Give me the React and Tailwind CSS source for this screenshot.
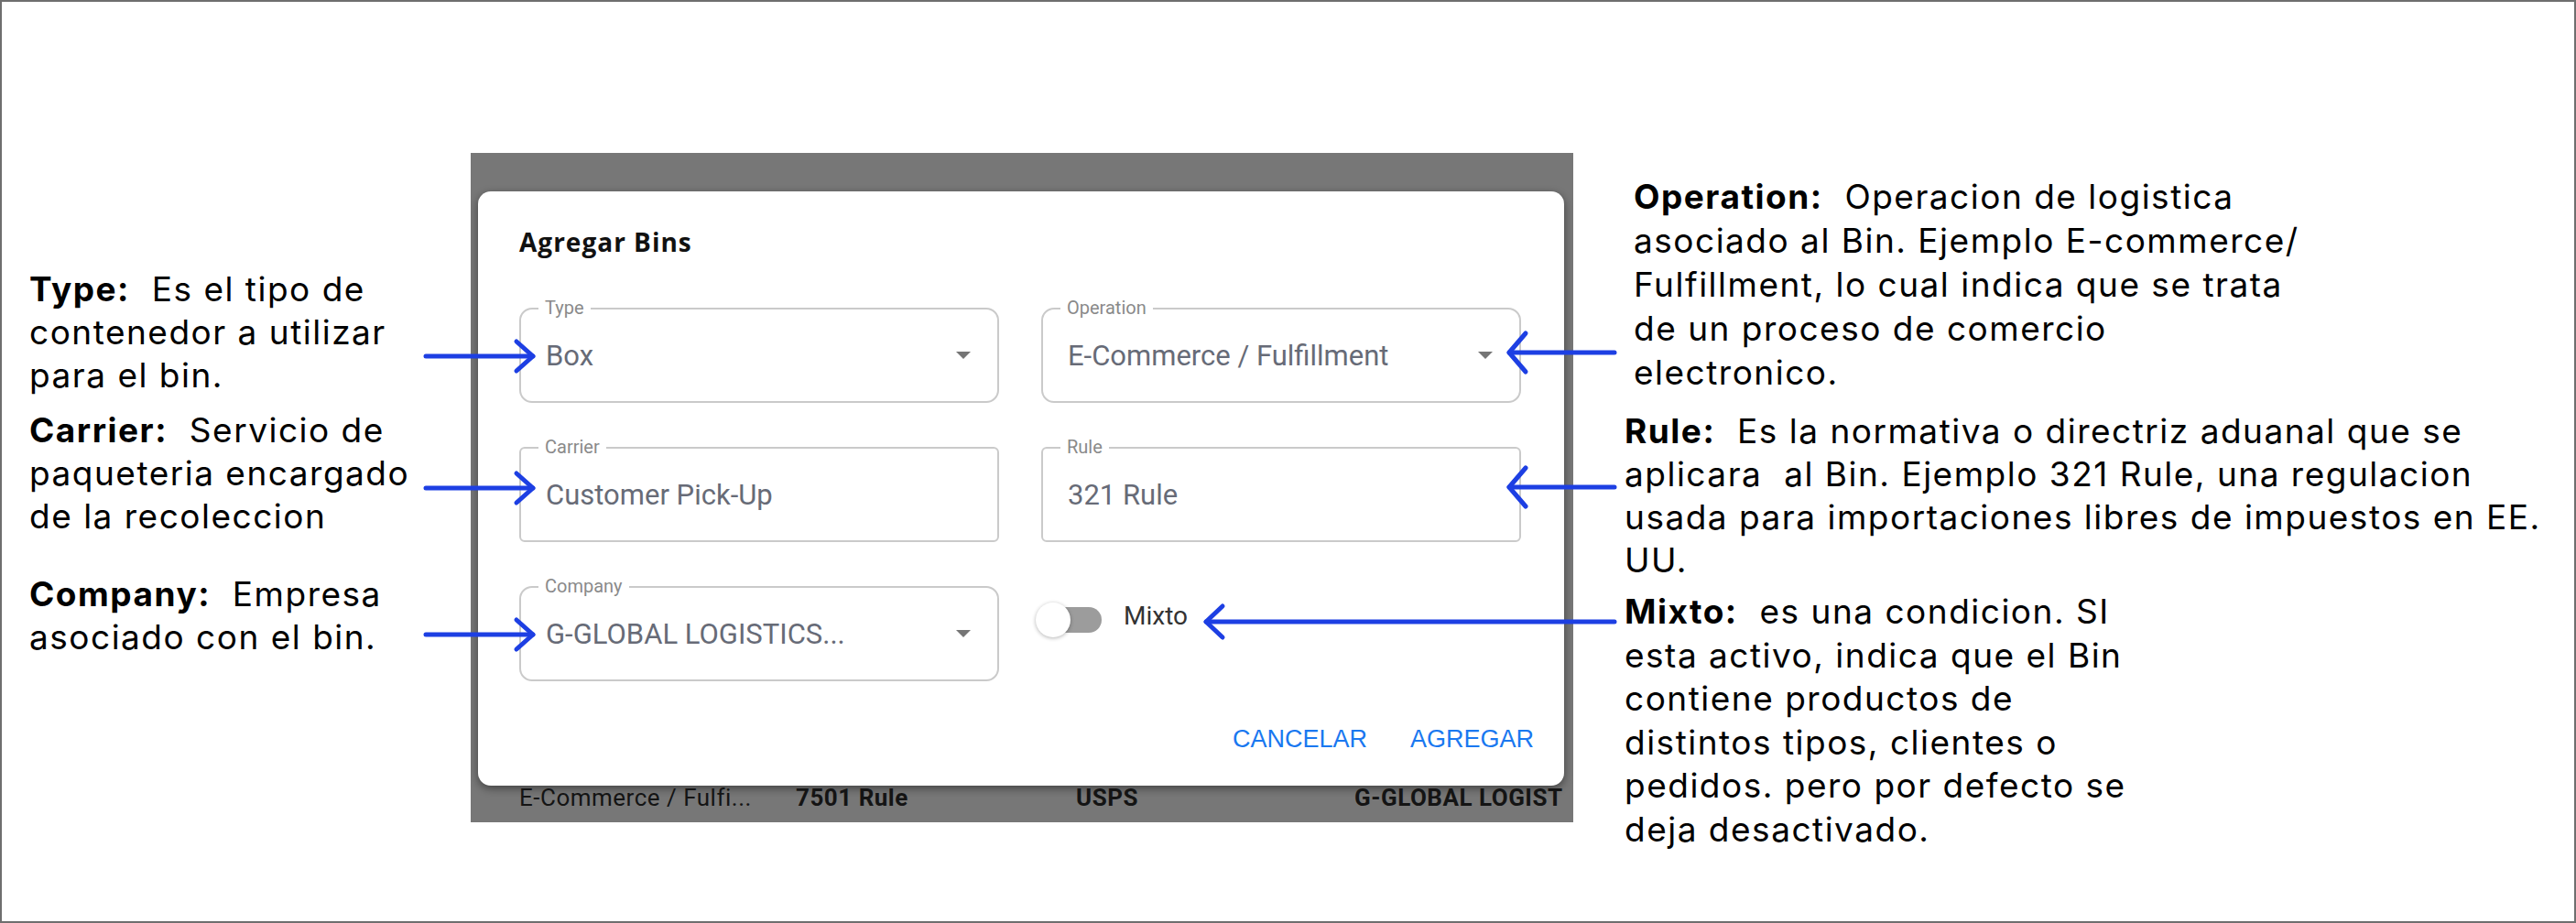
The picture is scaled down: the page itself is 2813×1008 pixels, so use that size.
import React from "react";

const inter = { fontFamily: "Inter, 'Liberation Sans', sans-serif" };

function Note({ label, lines, className }) {
  return (
    <div className={className}>
      {lines.map((line, i) => (
        <div key={i} className="whitespace-pre">
          {i === 0 && <span className="font-bold">{label}</span>}
          {i === 0 ? "\u00a0 " + line : line}
        </div>
      ))}
    </div>
  );
}

function Field({ label, value, select }) {
  return (
    <div
      className={
        select
          ? "relative h-[104px] border-2 border-[#cacaca] rounded-[14px] flex items-center pl-[27px] pr-[29px]"
          : "relative h-[104px] border-2 border-[#cacaca] rounded-[6px] flex items-center pl-[27px] pr-[29px]"
      }
    >
      <span className="absolute -top-[12px] left-[19px] bg-white px-[7px] text-[20px] leading-[20px] text-[#8a8a8a]">
        {label}
      </span>
      <span className="flex-1 text-[31px] leading-none text-[#676b77] whitespace-nowrap">
        {value}
      </span>
      {select && (
        <svg width="16" height="8" viewBox="0 0 16 8">
          <path d="M0 0h16L8 8z" fill="#757575" />
        </svg>
      )}
    </div>
  );
}

function Arrow({ x1, x2, y, dx, dy }) {
  // arrowhead sits at x2, pointing away from x1
  const dir = x2 > x1 ? -1 : 1;
  return (
    <g>
      <line x1={x1} y1={y} x2={x2} y2={y} />
      <polyline points={`${x2 + dir * dx},${y - dy} ${x2},${y} ${x2 + dir * dx},${y + dy}`} fill="none" />
    </g>
  );
}

export default function App() {
  return (
    <div className="relative w-[2813px] h-[1008px] bg-white" style={inter}>
      <div className="flex w-full h-full border-2 border-[#6e6e6e] text-black">
        {/* left notes */}
        <div className="w-[512px] shrink-0 pl-[30px] text-[37px] leading-[47px] tracking-[1.5px]">
          <Note
            className="mt-[290px]"
            label="Type:"
            lines={["Es el tipo de", "contenedor a utilizar", "para el bin."]}
          />
          <Note
            className="mt-[13px]"
            label="Carrier:"
            lines={["Servicio de", "paqueteria encargado", "de la recoleccion"]}
          />
          <Note
            className="mt-[38px]"
            label="Company:"
            lines={["Empresa", "asociado con el bin."]}
          />
        </div>

        {/* screenshot of the dialog */}
        <div className="w-[1204px] h-[731px] shrink-0 mt-[165px] bg-[#777777] overflow-hidden pl-[8px] pt-[42px]">
          <div
            className="w-[1186px] bg-white rounded-[14px] pl-[45px] pr-[33px] pt-[41px] pb-[37px] shadow-[0_3px_10px_rgba(0,0,0,0.45)]"
            style={{ fontFamily: "Roboto, 'Liberation Sans', sans-serif" }}
          >
            <div
              className="text-[28px] leading-[28px] font-bold tracking-[1px] text-[#111]"
              style={{ fontFamily: "'Open Sans', sans-serif" }}
            >
              Agregar Bins
            </div>
            <div className="w-[1094px] mt-[58px] grid grid-cols-2 gap-x-[46px] gap-y-[48px]">
              <Field label="Type" value="Box" select />
              <Field label="Operation" value="E-Commerce / Fulfillment" select />
              <Field label="Carrier" value="Customer Pick-Up" />
              <Field label="Rule" value="321 Rule" />
              <Field label="Company" value="G-GLOBAL LOGISTICS..." select />
              <div className="h-[74px] flex items-center">
                <div className="relative w-[72px] h-[40px] -ml-[6px] flex items-center">
                  <div className="absolute left-[10px] w-[62px] h-[28px] rounded-full bg-[#9c9c9c]" />
                  <div className="absolute left-0 w-[38px] h-[38px] rounded-full bg-white shadow-[0_1px_4px_rgba(0,0,0,0.3)]" />
                </div>
                <span className="ml-[24px] mb-[8px] text-[28px] leading-none text-[#333]">Mixto</span>
              </div>
            </div>
            <div
              className="mt-[50px] flex justify-end gap-[47px] text-[27px] leading-[27px] text-[#1a78f0]"
              style={{ fontFamily: "'Liberation Sans', Arial, sans-serif" }}
            >
              <span>CANCELAR</span>
              <span>AGREGAR</span>
            </div>
          </div>
          <div
            className="flex ml-[45px] mt-[1px] text-[26px] leading-[25px] tracking-[0.5px] text-[#141414] whitespace-nowrap"
            style={{ fontFamily: "Roboto, sans-serif" }}
          >
            <span className="w-[302px] shrink-0">E-Commerce / Fulfi...</span>
            <span className="w-[306px] shrink-0 font-bold">7501 Rule</span>
            <span className="w-[304px] shrink-0 font-bold">USPS</span>
            <span className="shrink-0 font-bold">G-GLOBAL LOGIST</span>
          </div>
        </div>

        {/* right notes */}
        <div className="flex-1 pl-[56px] text-[37px] leading-[48px] tracking-[1.5px]">
          <Note
            className="mt-[189px] ml-[10px]"
            label="Operation:"
            lines={[
              "Operacion de logistica",
              "asociado al Bin. Ejemplo E-commerce/",
              "Fulfillment, lo cual indica que se trata",
              "de un proceso de comercio",
              "electronico.",
            ]}
          />
          <Note
            className="mt-[16px] leading-[47px]"
            label="Rule:"
            lines={[
              "Es la normativa o directriz aduanal que se",
              "aplicara  al Bin. Ejemplo 321 Rule, una regulacion",
              "usada para importaciones libres de impuestos en EE.",
              "UU.",
            ]}
          />
          <Note
            className="mt-[9px] leading-[47.5px]"
            label="Mixto:"
            lines={[
              "es una condicion. SI",
              "esta activo, indica que el Bin",
              "contiene productos de",
              "distintos tipos, clientes o",
              "pedidos. pero por defecto se",
              "deja desactivado.",
            ]}
          />
        </div>
      </div>

      <svg
        className="absolute top-0 left-0 pointer-events-none"
        width="2813"
        height="1008"
        stroke="#1d3fe3"
        strokeWidth="5"
        strokeLinecap="round"
        strokeLinejoin="round"
      >
        <Arrow x1={465} x2={582} y={389} dx={18} dy={16} />
        <Arrow x1={465} x2={582} y={533} dx={18} dy={16} />
        <Arrow x1={465} x2={582} y={693} dx={18} dy={16} />
        <Arrow x1={1763} x2={1648} y={385} dx={18} dy={21} />
        <Arrow x1={1763} x2={1648} y={532} dx={18} dy={21} />
        <Arrow x1={1763} x2={1317} y={679} dx={18} dy={17} />
      </svg>
    </div>
  );
}
